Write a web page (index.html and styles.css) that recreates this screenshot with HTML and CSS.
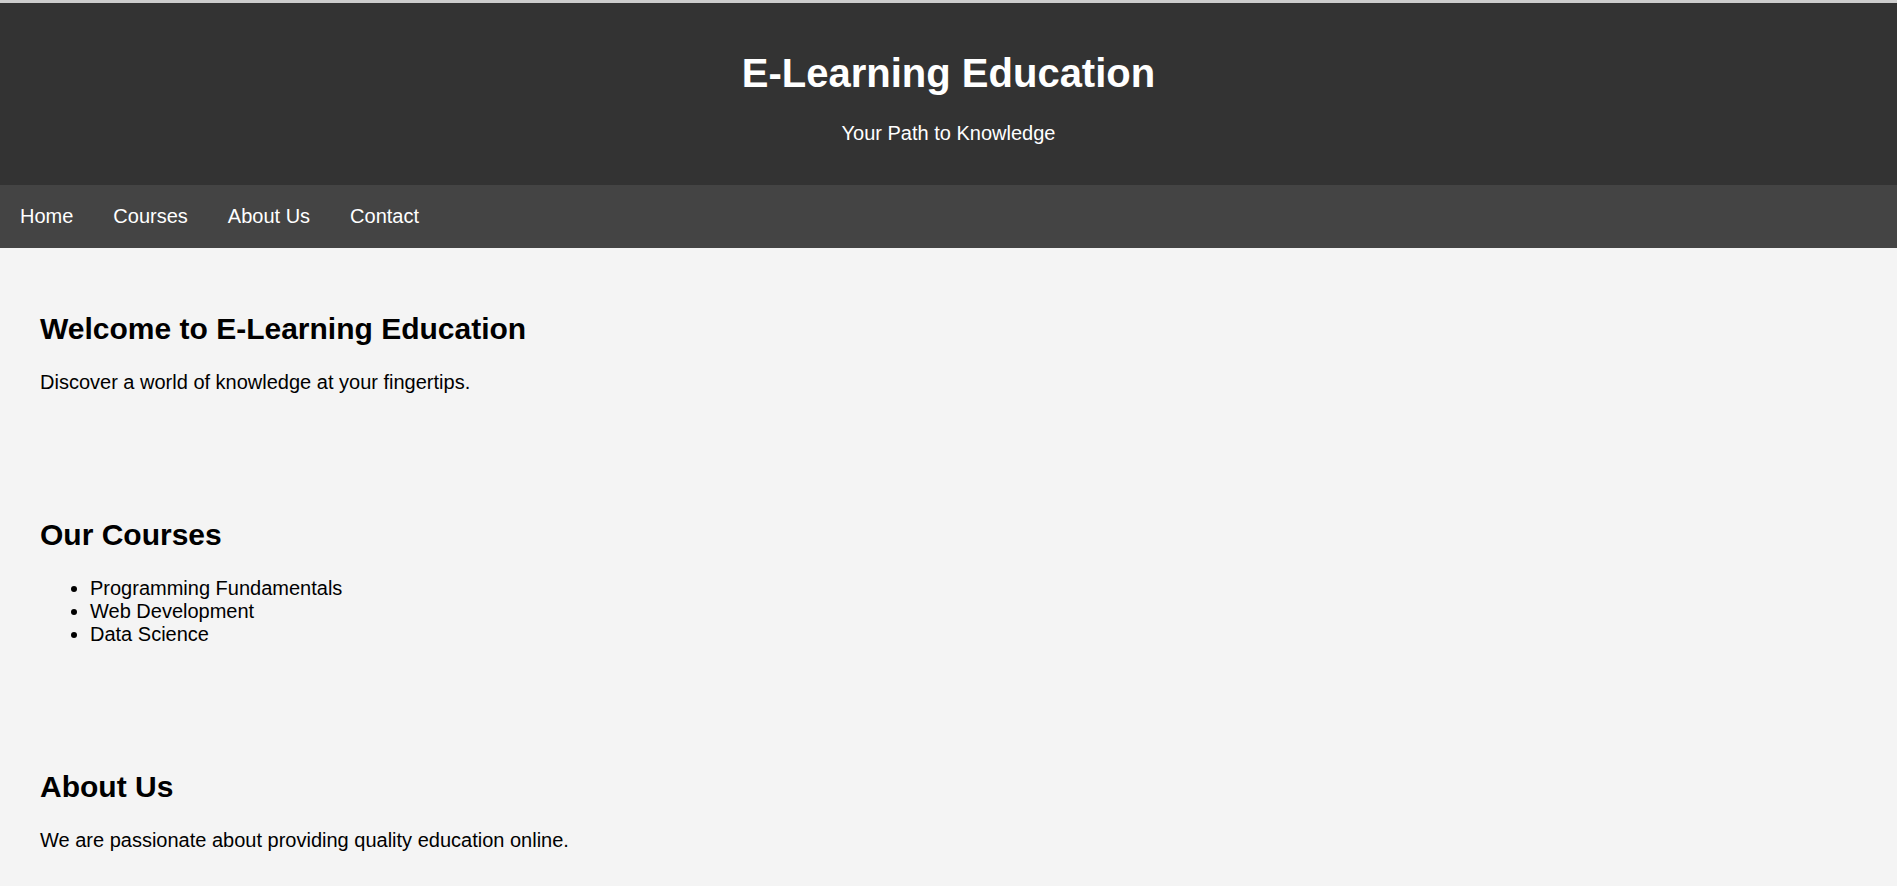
FILE: index.html
```html
<!DOCTYPE html>
<html>
<head>
  <title>E-Learning Education</title>
  <link rel="stylesheet" href="styles.css">
</head>
<body>
  <header class="site-header">
    <h1>E-Learning Education</h1>
    <p>Your Path to Knowledge</p>
  </header>

  <nav class="site-nav">
    <a href="#home">Home</a>
    <a href="#courses">Courses</a>
    <a href="#about">About Us</a>
    <a href="#contact">Contact</a>
  </nav>

  <section id="home" class="section">
    <h2>Welcome to E-Learning Education</h2>
    <p>Discover a world of knowledge at your fingertips.</p>
  </section>

  <section id="courses" class="section">
    <h2>Our Courses</h2>
    <ul>
      <li>Programming Fundamentals</li>
      <li>Web Development</li>
      <li>Data Science</li>
    </ul>
  </section>

  <section id="about" class="section">
    <h2>About Us</h2>
    <p>We are passionate about providing quality education online.</p>
  </section>
</body>
</html>
```

FILE: styles.css
```css
html {
  overflow: hidden;
}
body {
  font-family: "Liberation Sans", Arial, sans-serif;
  font-size: 20px;
  margin: 0;
  background-color: #f4f4f4;
  color: #000;
}
.site-header {
  background-color: #333;
  color: white;
  text-align: center;
  padding: 20px;
  border-top: 3px solid #cdcdcd;
}
.site-header h1 {
  font-size: 40px;
  margin: 28px 0 26px;
}
.site-header p {
  margin: 20px 0;
}
.site-nav {
  display: flex;
  background-color: #444;
  padding: 20px 0;
}
.site-nav a {
  color: white;
  text-decoration: none;
  padding: 0 20px;
}
.section {
  padding: 40px;
}
.section h2 {
  font-size: 30px;
  margin: 24px 0 25px;
}
.section p,
.section ul {
  margin: 20px 0;
}
.section ul {
  padding-left: 50px;
}
```
